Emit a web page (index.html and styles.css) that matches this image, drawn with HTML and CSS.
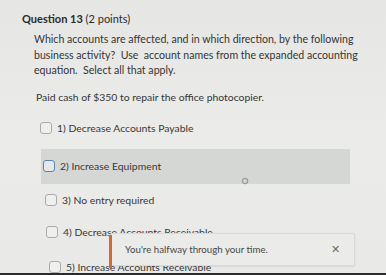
FILE: index.html
```html
<!DOCTYPE html>
<html lang="en">
<head>
  <meta charset="UTF-8" />
  <meta name="viewport" content="width=device-width, initial-scale=1.0"/>
  <title>Question 13</title>
  <link rel="stylesheet" href="styles.css">
</head>
<body>
  <div class="screen">
    <div class="question">
      <h2 class="q-title"><b>Question 13</b> (2 points)</h2>
      <p class="q-text">Which accounts are affected, and in which direction, by the following business activity?&nbsp; Use&nbsp; account names from the expanded accounting equation.&nbsp; Select all that apply.</p>
      <p class="q-case">Paid cash of $350 to repair the office photocopier.</p>

      <div class="answers">
        <label class="answer a1"><span class="box"></span>1) Decrease Accounts Payable</label>
        <label class="answer a2 hover"><span class="box"></span>2) Increase Equipment</label>
        <label class="answer a3"><span class="box"></span>3) No entry required</label>
        <label class="answer a4"><span class="box"></span>4) Decrease Accounts Receivable</label>
        <label class="answer a5"><span class="box"></span>5) Increase Accounts Receivable</label>
      </div>
    </div>

    <!-- mouse pointer over option 2 -->
    <svg class="pointer" width="8" height="8" viewBox="0 0 8 8">
      <circle cx="4" cy="4" r="2.6" fill="none" stroke="#9a9c9a" stroke-width="1.4"/>
    </svg>

    <div class="toast">
      <span class="toast-bar"></span>
      <span class="toast-msg">You're halfway through your time.</span>
      <span class="toast-close">&#x2715;</span>
    </div>
  </div>
  <div class="bezel"></div>
</body>
</html>
```

FILE: styles.css
```css
body {
  margin: 0;
  background: #e8e8e6;
  font-family: Lato, 'Open Sans', sans-serif;
  color: #353535;
  overflow: hidden;
}

.screen {
  position: relative;
  height: 273px;
  overflow: hidden;
  background: linear-gradient(180deg, #e6e6e4 0%, #ebebe9 50%, #e9e9e7 100%);
}

.question {
  padding: 12px 0 0 22px;
}

.q-title {
  margin: 0;
  font-size: 11px;
  font-weight: normal;
  color: #2a2a2a;
  line-height: 14px;
}

.q-title b {
  font-weight: bold;
}

.q-text {
  margin: 6px 0 0 12px;
  width: 345px;
  font-size: 10.6px;
  line-height: 15.5px;
}

.q-case {
  margin: 11px 0 0 14px;
  font-size: 10.4px;
  line-height: 15px;
}

.answers {
  margin-top: 6px;
  width: 310px;
  margin-left: 18px;
}

.answer {
  display: flex;
  align-items: center;
  gap: 5px;
  height: 35px;
  font-size: 10.4px;
  color: #383838;
}

.answer.hover {
  background: #d5d7d5;
  margin-top: 3px;
}

.a1 { padding-left: 0; }
.a2 { padding-left: 2px; margin-left: 1px; }
.a3 { padding-left: 5px; margin-top: -1px; }
.a4 { padding-left: 6px; margin-top: -3px; }
.a5 { padding-left: 9px; }

.box {
  width: 10px;
  height: 10px;
  border: 1.5px solid #a9aaa9;
  border-radius: 3px;
  background: #efefed;
  flex: none;
}

.a2 .box {
  border-color: #5a86b3;
  background: #e6e8ea;
}

.pointer {
  position: absolute;
  left: 241px;
  top: 177px;
}

.toast {
  position: absolute;
  left: 110px;
  top: 233px;
  width: 245px;
  height: 33px;
  display: flex;
  align-items: center;
  box-sizing: border-box;
  padding: 0 14px 2px 14px;
  background: #ebebe9;
  border: 1px solid #d9d9d7;
  border-radius: 2px;
  box-shadow: 0 1px 2px rgba(0, 0, 0, 0.08);
}

.toast-bar {
  position: absolute;
  left: -2px;
  top: 1px;
  width: 3px;
  height: 33px;
  background: #cf6a34;
}

.toast-msg {
  flex: 1;
  font-size: 9.7px;
  color: #474747;
}

.toast-close {
  font-size: 11px;
  color: #6a6a6a;
}

.bezel {
  height: 2px;
  background: #2b2b2b;
}
```
